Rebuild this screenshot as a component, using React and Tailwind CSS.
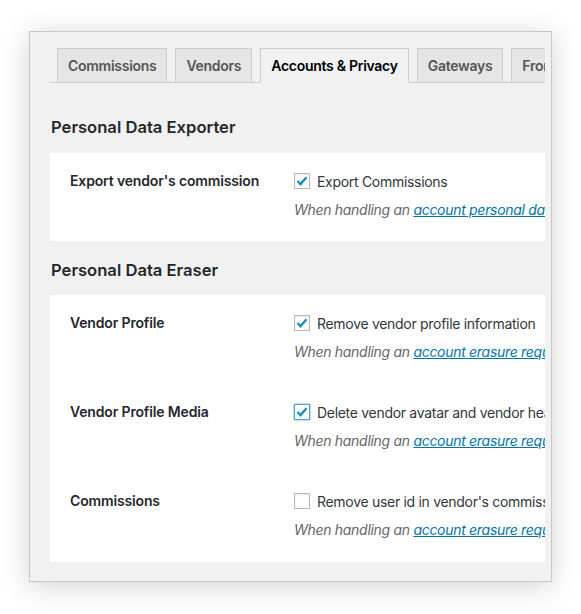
const tabs = [
  { label: 'Commissions' },
  { label: 'Vendors' },
  { label: 'Accounts & Privacy', active: true },
  { label: 'Gateways' },
  { label: 'Front End' },
];

function Checkbox({ checked, focused }) {
  return (
    <span
      className={
        'relative inline-block h-4 w-4 shrink-0 border bg-white ' +
        (focused
          ? 'border-[#5b9dd9] shadow-[0_0_2px_rgba(30,140,190,0.8)]'
          : 'border-[#b4b9be] shadow-[inset_0_1px_2px_rgba(0,0,0,0.1)]')
      }
    >
      {checked && (
        <svg viewBox="0 0 16 16" className="absolute left-0 top-0 h-[14px] w-[14px]">
          <path d="M2.8 8 L6.3 11.6 L13.2 3.8" fill="none" stroke="#1e8cbe" strokeWidth="2.7" />
        </svg>
      )}
    </span>
  );
}

function Row({ label, option, checked, focused, link, rest, last }) {
  return (
    <div className={'flex pt-4 ' + (last ? 'pb-[19px]' : 'pb-5')}>
      <div className="w-[224px] shrink-0 text-[14px] font-semibold leading-6 tracking-[-0.15px] text-[#23282d]">{label}</div>
      <div className="min-w-0 whitespace-nowrap tracking-[-0.3px]">
        <div className="flex h-6 items-center gap-[7px] text-[14px] text-[#32373c]">
          <Checkbox checked={checked} focused={focused} />
          <span>{option}</span>
        </div>
        <p className="mt-[5px] text-[14px] italic leading-6 text-[#666]">
          When handling an <a href="#" className="text-[#0073aa] underline">{link}</a>
          {rest}
        </p>
      </div>
    </div>
  );
}

export default function App() {
  return (
    <div className="min-h-[614px] bg-white pl-[29px] pt-[31px]" style={{ fontFamily: 'Inter, "Liberation Sans", sans-serif' }}>
      <div className="h-[551px] w-[523px] overflow-hidden border border-[#c8c8c8] bg-[#f1f1f1] pl-5 pr-[5px] pt-4 shadow-[0_4px_26px_rgba(0,0,0,0.18)]">
        <div className="w-[495px] overflow-hidden">
          {/* tabs */}
          <div className="flex gap-2 whitespace-nowrap border-b border-[#ccc] pl-[7px]">
            {tabs.map((t) => (
              <div
                key={t.label}
                className={
                  '-mb-px flex h-[35px] shrink-0 items-center border px-[10px] text-[14px] font-semibold tracking-[-0.28px] ' +
                  (t.active
                    ? 'border-[#ccc] border-b-[#f1f1f1] bg-[#f1f1f1] text-black'
                    : 'border-[#ccc] bg-[#e5e5e5] text-[#555]')
                }
              >
                {t.label}
              </div>
            ))}
          </div>

          <h2 className="mb-4 mt-[34px] pl-px text-[16.6px] font-semibold leading-5 text-[#23282d]">Personal Data Exporter</h2>
          <div className="bg-white px-5">
            <Row
              label="Export vendor's commission"
              option="Export Commissions"
              checked
              link="account personal data export request"
              rest=", the vendor's commissions will be included."
              last
            />
          </div>

          <h2 className="mb-[15px] mt-[19px] pl-px text-[16.6px] font-semibold leading-5 text-[#23282d]">Personal Data Eraser</h2>
          <div className="bg-white px-5">
            <Row
              label="Vendor Profile"
              option="Remove vendor profile information"
              checked
              link="account erasure request"
              rest=", the vendor profile will be removed."
            />
            <Row
              label="Vendor Profile Media"
              option="Delete vendor avatar and vendor header image"
              checked
              focused
              link="account erasure request"
              rest=", the vendor media will be deleted."
            />
            <Row
              label="Commissions"
              option="Remove user id in vendor's commissions"
              link="account erasure request"
              rest=", the user id will be removed."
            />
          </div>
        </div>
      </div>
    </div>
  );
}
